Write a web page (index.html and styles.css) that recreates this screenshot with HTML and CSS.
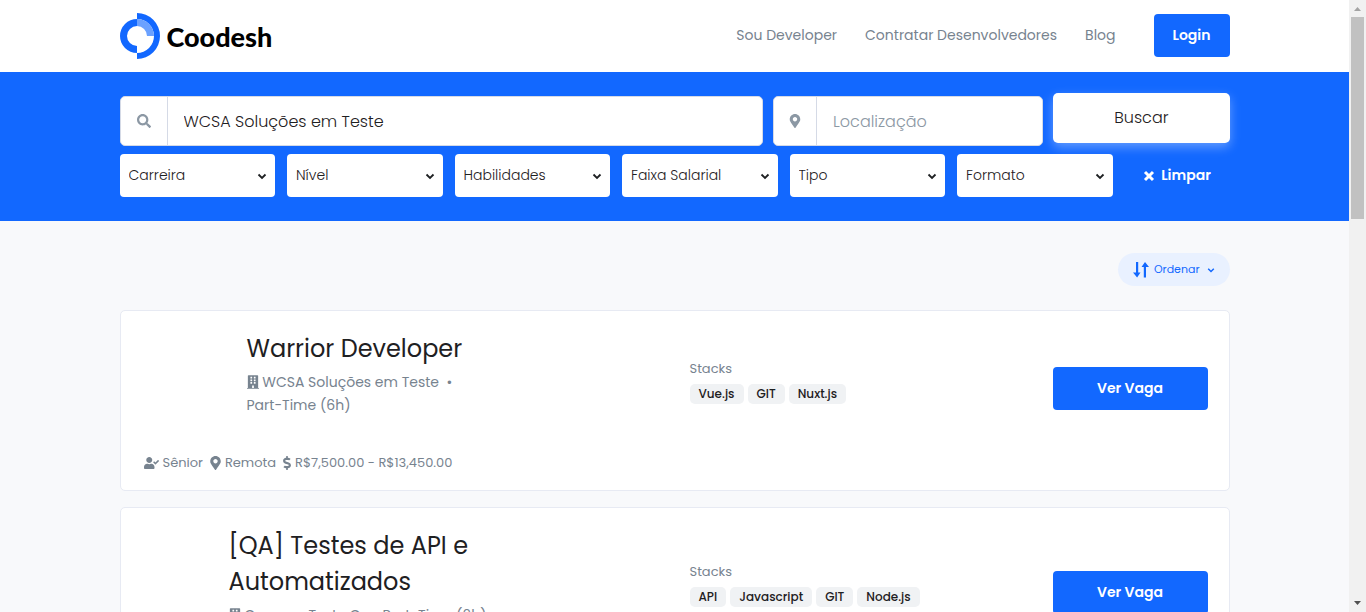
FILE: index.html
```html
<!DOCTYPE html>
<html lang="pt-BR">
<head>
<meta charset="utf-8">
<meta name="viewport" content="width=device-width, initial-scale=1">
<title>Coodesh - Vagas</title>
<link rel="stylesheet" href="styles.css">
</head>
<body>
<svg class="sprite" aria-hidden="true">
  <symbol id="i-search" viewBox="0 0 512 512"><path d="M505 442.700L405.300 343c-4.500-4.500-10.600-7-17-7H372c27.600-35.300 44-79.700 44-128C416 93.100 322.900 0 208 0S0 93.100 0 208s93.100 208 208 208c48.300 0 92.700-16.400 128-44v16.300c0 6.400 2.500 12.500 7 17l99.700 99.700c9.400 9.400 24.600 9.400 33.900 0l28.300-28.300c9.400-9.400 9.400-24.600.1-34zM208 336c-70.700 0-128-57.200-128-128 0-70.700 57.200-128 128-128 70.700 0 128 57.200 128 128 0 70.700-57.200 128-128 128z"/></symbol>
  <symbol id="i-pin" viewBox="0 0 384 512"><path d="M172.300 501.700C27 291 0 269.400 0 192 0 86 86 0 192 0s192 86 192 192c0 77.400-27 99-172.300 309.700-9.500 13.800-29.900 13.800-39.400 0zM192 272c44.200 0 80-35.800 80-80s-35.800-80-80-80-80 35.800-80 80 35.800 80 80 80z"/></symbol>
  <symbol id="i-chevron" viewBox="0 0 10 8"><path d="M1.500 2.500 5 6 8.500 2.500" fill="none" stroke="currentColor" stroke-width="1.800"/></symbol>
  <symbol id="i-times" viewBox="0 0 12 12"><path d="M2 2 10 10M10 2 2 10" fill="none" stroke="currentColor" stroke-width="3"/></symbol>
  <symbol id="i-sort" viewBox="0 0 16 16"><path d="M3 0h2.200v10.500H7.500L4.100 15.500 0 10.500H3zM10.800 15.500H13V5h3L12 0 8.500 5h2.300z"/></symbol>
  <symbol id="i-building" viewBox="0 0 448 512"><path d="M436 480h-20V24c0-13.300-10.700-24-24-24H56C42.700 0 32 10.700 32 24v456H12c-6.600 0-12 5.400-12 12v20h448v-20c0-6.600-5.400-12-12-12zM128 76c0-6.600 5.400-12 12-12h40c6.600 0 12 5.400 12 12v40c0 6.600-5.400 12-12 12h-40c-6.600 0-12-5.400-12-12zm0 96c0-6.600 5.400-12 12-12h40c6.600 0 12 5.400 12 12v40c0 6.600-5.400 12-12 12h-40c-6.600 0-12-5.400-12-12zm52 148h-40c-6.600 0-12-5.400-12-12v-40c0-6.600 5.400-12 12-12h40c6.600 0 12 5.400 12 12v40c0 6.600-5.400 12-12 12zm76 160h-64v-84c0-6.600 5.400-12 12-12h40c6.600 0 12 5.400 12 12zm64-172c0 6.600-5.400 12-12 12h-40c-6.600 0-12-5.400-12-12v-40c0-6.600 5.400-12 12-12h40c6.600 0 12 5.400 12 12zm0-96c0 6.600-5.400 12-12 12h-40c-6.600 0-12-5.400-12-12v-40c0-6.600 5.400-12 12-12h40c6.600 0 12 5.400 12 12zm0-96c0 6.600-5.400 12-12 12h-40c-6.600 0-12-5.400-12-12V76c0-6.600 5.400-12 12-12h40c6.600 0 12 5.400 12 12z"/></symbol>
  <symbol id="i-user" viewBox="0 0 640 512"><path d="M224 256c70.700 0 128-57.300 128-128S294.700 0 224 0 96 57.300 96 128s57.300 128 128 128zm89.600 32h-16.700c-22.200 10.200-46.900 16-72.900 16s-50.600-5.800-72.900-16h-16.700C60.200 288 0 348.200 0 422.400V464c0 26.500 21.500 48 48 48h352c26.500 0 48-21.500 48-48v-41.600c0-74.200-60.200-134.400-134.400-134.400zM636.600 159.600l-27.800-28.200c-4.600-4.700-12.100-4.700-16.800-.1l-104.800 104-45.500-45.800c-4.600-4.700-12.100-4.700-16.800-.1l-28.100 27.900c-4.700 4.600-4.700 12.100-.1 16.800l81.700 82.300c4.600 4.700 12.100 4.700 16.800.1l141.300-140.200c4.600-4.700 4.700-12.200.1-16.700z"/></symbol>
  <symbol id="i-dollar" viewBox="0 0 288 512"><path d="M209.200 233.400l-108-31.600C88.700 198.200 80 186.500 80 173.500c0-16.300 13.200-29.500 29.500-29.500h66.300c12.200 0 24.200 3.700 34.200 10.500 6.100 4.100 14.300 3.100 19.500-2l34.800-34c7.100-6.900 6.100-18.400-1.800-24.500C238 74.800 207.400 64.100 176 64V16c0-8.800-7.200-16-16-16h-32c-8.800 0-16 7.200-16 16v48h-2.500C45.800 64-5.400 118.700.5 183.600c4.200 46.100 39.400 83.600 83.800 96.600l102.500 30c12.500 3.700 21.200 15.300 21.200 28.300 0 16.300-13.200 29.500-29.500 29.500h-66.300C100 368 88 364.300 78 357.500c-6.100-4.100-14.300-3.100-19.500 2l-34.800 34c-7.100 6.900-6.100 18.400 1.800 24.500 24.500 19.200 55.100 29.900 86.500 30v48c0 8.800 7.200 16 16 16h32c8.800 0 16-7.200 16-16v-48.200c46.600-.9 90.300-28.600 105.700-72.700 21.500-61.600-14.600-124.800-72.500-141.700z"/></symbol>
</svg>

<div class="window">
  <div class="page">
    <header class="header">
      <div class="container header-row">
        <a class="brand" href="#">
          <svg class="brand-mark" viewBox="0 0 40 46" aria-hidden="true">
            <path d="M17 0a23 23 0 0 1 0 46v-6a17 17 0 0 0 0-34z" fill="#1268ff"/>
            <path d="M17 6a17 17 0 0 0 0 34v-7a10 10 0 0 1 0-20z" fill="#1268ff"/>
            <path d="M17 6a17 17 0 0 1 17 17h-7a10 10 0 0 0-10-10z" fill="#6ba1ff"/>
          </svg>
          <span>Coodesh</span>
        </a>
        <nav class="nav">
          <a href="#">Sou Developer</a>
          <a href="#">Contratar Desenvolvedores</a>
          <a href="#">Blog</a>
        </nav>
        <button class="btn" type="button">Login</button>
      </div>
    </header>

    <form class="hero">
      <div class="container">
        <div class="search-row">
          <div class="field">
            <label for="q" aria-label="Buscar vagas"><svg class="i-14"><use href="#i-search"/></svg></label>
            <input id="q" type="text" value="WCSA Soluções em Teste">
          </div>
          <div class="field">
            <label for="place" aria-label="Localização"><svg class="i-14"><use href="#i-pin"/></svg></label>
            <input id="place" type="text" placeholder="Localização">
          </div>
          <button class="search-btn" type="button">Buscar</button>
        </div>
        <div class="filters">
          <div class="select"><select aria-label="Carreira"><option>Carreira</option></select><svg><use href="#i-chevron"/></svg></div>
          <div class="select"><select aria-label="Nível"><option>Nível</option></select><svg><use href="#i-chevron"/></svg></div>
          <div class="select"><select aria-label="Habilidades"><option>Habilidades</option></select><svg><use href="#i-chevron"/></svg></div>
          <div class="select"><select aria-label="Faixa Salarial"><option>Faixa Salarial</option></select><svg><use href="#i-chevron"/></svg></div>
          <div class="select"><select aria-label="Tipo"><option>Tipo</option></select><svg><use href="#i-chevron"/></svg></div>
          <div class="select"><select aria-label="Formato"><option>Formato</option></select><svg><use href="#i-chevron"/></svg></div>
          <button class="clear" type="reset"><svg><use href="#i-times"/></svg>Limpar</button>
        </div>
      </div>
    </form>

    <main class="container results">
      <button class="sort" type="button"><svg class="i-16"><use href="#i-sort"/></svg>Ordenar<svg class="caret"><use href="#i-chevron"/></svg></button>

      <article class="card">
        <div class="card-row">
          <div class="job">
            <div class="job-logo"></div>
            <div class="job-text">
              <h2>Warrior Developer</h2>
              <p><svg class="i-14"><use href="#i-building"/></svg> WCSA Soluções em Teste &nbsp;•<br>Part-Time (6h)</p>
            </div>
          </div>
          <div class="stacks">
            <h3>Stacks</h3>
            <ul><li>Vue.js</li><li>GIT</li><li>Nuxt.js</li></ul>
          </div>
          <button class="btn" type="button">Ver Vaga</button>
        </div>
        <ul class="meta">
          <li><svg class="i-user"><use href="#i-user"/></svg>Sênior</li>
          <li><svg class="i-pin"><use href="#i-pin"/></svg>Remota</li>
          <li><svg class="i-dollar"><use href="#i-dollar"/></svg>R$7,500.00 - R$13,450.00</li>
        </ul>
      </article>

      <article class="card">
        <div class="card-row">
          <div class="job">
            <div class="job-logo narrow"></div>
            <div class="job-text">
              <h2>[QA] Testes de API e Automatizados</h2>
              <p><svg class="i-14"><use href="#i-building"/></svg> Campus Teste Co • Part-Time (6h)</p>
            </div>
          </div>
          <div class="stacks">
            <h3>Stacks</h3>
            <ul><li>API</li><li>Javascript</li><li>GIT</li><li>Node.js</li></ul>
          </div>
          <button class="btn" type="button">Ver Vaga</button>
        </div>
      </article>
    </main>
  </div>

  <div class="scrollbar" aria-hidden="true">
    <svg viewBox="0 0 17 17"><path d="M5 11h7L8.500 7z" fill="#a3a3a3"/></svg>
    <div class="track"><div class="thumb"></div></div>
    <svg viewBox="0 0 17 17"><path d="M5 6h7L8.500 10z" fill="#505050"/></svg>
  </div>
</div>
</body>
</html>
```
FILE: styles.css
```css
* { box-sizing: border-box; }
body {
  margin: 0;
  font-family: Poppins, Inter, "Open Sans", sans-serif;
  font-size: 14px;
  color: #1e2022;
}
h2, h3, p, ul { margin: 0; padding: 0; font-weight: 400; }
ul { list-style: none; }
a { text-decoration: none; color: inherit; }
button, input, select { font: inherit; color: inherit; }
svg { fill: currentColor; flex: none; }
.sprite { display: none; }
.i-14 { width: 14px; height: 14px; }
.i-16 { width: 16px; height: 16px; }

.window { display: flex; height: 100vh; }
.page { flex: 1; min-width: 0; overflow: hidden; background: #f8f9fb; }
.container { max-width: 1110px; margin: 0 auto; }

.header { background: #fff; }
.header-row { display: flex; align-items: center; height: 72px; padding-bottom: 2px; }
.brand {
  display: flex;
  align-items: center;
  gap: 7px;
  margin-right: auto;
  padding-top: 2px;
  font: 900 27px Lato, sans-serif;
  color: #000;
}
.brand-mark { width: 40px; height: 46px; }
.nav { display: flex; gap: 28px; margin-right: 38px; color: #77838f; }

.btn {
  height: 43px;
  padding: 0 19px;
  border: 0;
  border-radius: 4px;
  background: #1268ff;
  color: #fff;
  font-weight: 600;
}

.hero { padding: 24px 0; background: #1268ff; }
.search-row { display: grid; grid-template-columns: 643fr 270fr 176fr; gap: 10px; }
.field {
  display: flex;
  height: 50px;
  border: 1px solid #d5dae6;
  border-radius: 5px;
  background: #fff;
  overflow: hidden;
}
.field label {
  display: grid;
  place-items: center;
  width: 47px;
  border-right: 1px solid #d5dae6;
  color: #8c98a4;
}
.field + .field label { width: 43px; }
.field input {
  flex: 1;
  min-width: 0;
  padding: 0 16px;
  border: 0;
  outline: 0;
  background: none;
  font-size: 16px;
  font-weight: 300;
}
.field input::placeholder { color: #8c98a4; opacity: 1; }
.search-btn {
  height: 50px;
  padding-bottom: 3px;
  border: 0;
  border-radius: 5px;
  background: #fff;
  font-size: 16px;
  font-weight: 300;
  box-shadow: 0 4px 11px rgba(255, 255, 255, .35);
  transform: translateY(-3px);
}
.filters { display: grid; grid-template-columns: repeat(6, 311fr) 210fr; gap: 12px; margin-top: 8px; }
.select { display: grid; align-items: center; }
.select select {
  grid-area: 1 / 1;
  appearance: none;
  width: 100%;
  height: 43px;
  padding: 0 9px 2px;
  border: 0;
  border-radius: 4px;
  background: #fff;
  font-weight: 300;
}
.select svg { grid-area: 1 / 1; justify-self: end; width: 10px; height: 8px; margin-right: 8px; pointer-events: none; }
.clear {
  display: flex;
  align-items: center;
  justify-content: center;
  gap: 6px;
  border: 0;
  background: none;
  color: #fff;
  font-weight: 600;
}
.clear svg { width: 12px; height: 12px; }

.results { display: flex; flex-direction: column; gap: 16px; padding-top: 32px; }
.sort {
  display: flex;
  align-items: center;
  align-self: flex-end;
  gap: 5px;
  height: 33px;
  margin-bottom: 8px;
  padding: 0 15px;
  border: 0;
  border-radius: 17px;
  background: #e9f1ff;
  color: #1268ff;
  font-size: 11px;
}
.caret { width: 8px; height: 8px; margin-left: 2px; }

.card {
  padding: 20px 21px 17px 23px;
  border: 1px solid #e7eaf3;
  border-radius: 5px;
  background: #fff;
}
.card-row { display: grid; grid-template-columns: 546fr 363fr 155fr; align-items: center; }
.job { display: flex; padding-bottom: 29px; }
.job-logo { flex: none; width: 103px; }
.job-logo.narrow { width: 85px; }
.job-text { max-width: 270px; color: #77838f; }
.job-text h2 { font-size: 24px; line-height: 36px; color: #1e2022; }
.job-text p { margin-top: 4px; line-height: 23px; white-space: nowrap; }
.job-text svg { width: 12px; vertical-align: -2px; }
.stacks { padding-bottom: 15px; }
.stacks h3 { font-size: 13px; line-height: 20px; color: #77838f; }
.stacks ul { display: flex; gap: 4px; margin-top: 5px; }
.stacks li {
  padding: 0 9px;
  border-radius: 5px;
  background: #f0f2f4;
  font-size: 12px;
  font-weight: 500;
  line-height: 20px;
}
.meta { display: flex; gap: 7px; margin-top: 7px; font-size: 13px; line-height: 20px; color: #77838f; }
.meta li { display: flex; align-items: center; gap: 4px; }
.i-user { width: 15px; height: 12px; }
.i-pin { width: 11px; height: 14px; }
.i-dollar { width: 8px; height: 14px; }

.scrollbar { display: flex; flex-direction: column; width: 17px; background: #f1f1f1; }
.scrollbar svg { width: 17px; height: 17px; }
.track { flex: 1; padding: 0 2px; }
.thumb { height: 35%; background: #c1c1c1; }
```
